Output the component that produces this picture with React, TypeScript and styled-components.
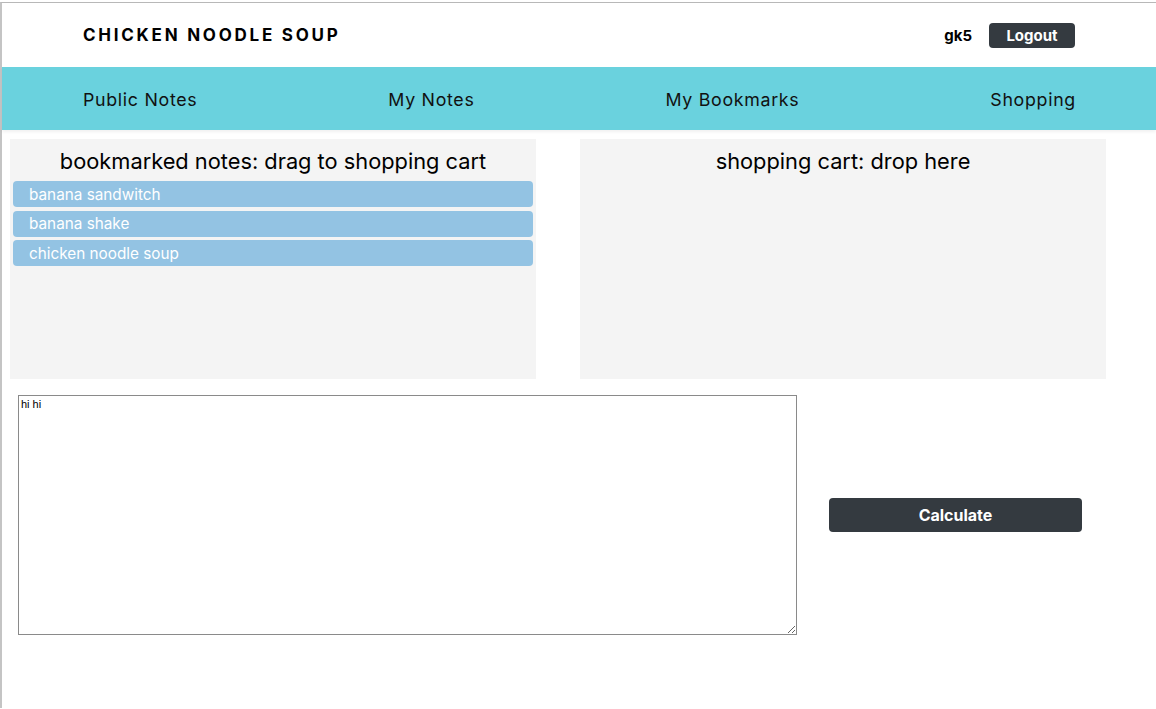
import React from "react"
import styled, { createGlobalStyle } from "styled-components"

const GlobalStyle = createGlobalStyle`
  html, body {
    margin: 0;
    padding: 0;
    background: #fff;
    font-family: Inter, "Noto Sans", sans-serif;
  }
`

const Frame = styled.div`
  margin-top: 2px;
  border-top: 1px solid #b8b8b8;
  border-left: 2px solid #c4c4c4;
  min-height: 706px;
  box-sizing: border-box;
`

const Header = styled.header`
  height: 64px;
  display: flex;
  align-items: center;
  justify-content: space-between;
  padding: 0 81px 0 81px;
`

const Brand = styled.div`
  font-size: 17px;
  font-weight: 700;
  letter-spacing: 2.75px;
  color: #000;
`

const UserBox = styled.div`
  display: flex;
  align-items: center;
  gap: 17px;
`

const UserName = styled.span`
  font-size: 15px;
  font-weight: 700;
`

const DarkButton = styled.button<{ $wide?: boolean }>`
  background: #343a40;
  color: #fff;
  border: none;
  border-radius: 4px;
  font-family: inherit;
  font-weight: 700;
  font-size: ${(p) => (p.$wide ? "16px" : "15px")};
  height: ${(p) => (p.$wide ? "34px" : "25px")};
  width: ${(p) => (p.$wide ? "253px" : "86px")};
  cursor: pointer;
`

const Nav = styled.nav`
  height: 63px;
  background: #6ad2de;
  display: flex;
  align-items: center;
  justify-content: space-between;
  padding: 2px 80px 0 81px;
  box-sizing: border-box;
  box-shadow: 0 2px 3px rgba(0, 0, 0, 0.06);
`

const NavLink = styled.a`
  font-size: 17.8px;
  letter-spacing: 0.7px;
  color: #111;
  text-decoration: none;
`

const Boards = styled.div`
  display: flex;
  gap: 44px;
  padding: 9px 0 0 8px;
`

const Panel = styled.section`
  width: 526px;
  height: 240px;
  background: #f4f4f4;
  display: flex;
  flex-direction: column;
  padding: 0 3px;
  box-sizing: border-box;
`

const PanelTitle = styled.h2`
  margin: 9px 0 7px;
  font-size: 21.8px;
  font-weight: 400;
  text-align: center;
  color: #000;
  line-height: 26px;
`

const NoteList = styled.div`
  display: flex;
  flex-direction: column;
  gap: 3.5px;
`

const NoteItem = styled.div`
  height: 26px;
  background: #93c3e3;
  border-radius: 4px;
  color: #fff;
  font-size: 15.3px;
  display: flex;
  align-items: center;
  padding-left: 16px;
`

const Bottom = styled.div`
  display: flex;
  align-items: center;
  padding: 16px 0 0 16px;
  gap: 32px;
`

const Notes = styled.textarea`
  width: 779px;
  height: 240px;
  box-sizing: border-box;
  border: 1px solid #8a8a8a;
  color: #000;
  font-family: "Liberation Sans", Arial, sans-serif;
  font-size: 11px;
  padding: 2px;
  margin: 0;
`

const notes = ["banana sandwitch", "banana shake", "chicken noodle soup"]
const links = ["Public Notes", "My Notes", "My Bookmarks", "Shopping"]

export default function App() {
  return (
    <>
      <GlobalStyle />
      <Frame>
        <Header>
          <Brand>CHICKEN NOODLE SOUP</Brand>
          <UserBox>
            <UserName>gk5</UserName>
            <DarkButton>Logout</DarkButton>
          </UserBox>
        </Header>
        <Nav>
          {links.map((l) => (
            <NavLink key={l} href="#">{l}</NavLink>
          ))}
        </Nav>
        <Boards>
          <Panel>
            <PanelTitle>bookmarked notes: drag to shopping cart</PanelTitle>
            <NoteList>
              {notes.map((n) => (
                <NoteItem key={n}>{n}</NoteItem>
              ))}
            </NoteList>
          </Panel>
          <Panel>
            <PanelTitle>shopping cart: drop here</PanelTitle>
          </Panel>
        </Boards>
        <Bottom>
          <Notes defaultValue="hi hi" />
          <DarkButton $wide>Calculate</DarkButton>
        </Bottom>
      </Frame>
    </>
  )
}
